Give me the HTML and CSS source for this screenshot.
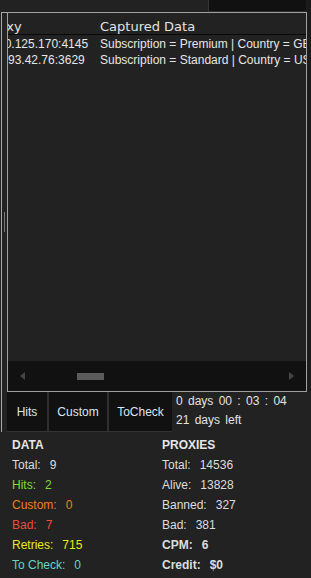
FILE: index.html
```html
<!DOCTYPE html>
<html lang="en">
<head>
  <meta charset="UTF-8">
  <meta name="viewport" content="width=device-width, initial-scale=1.0">
  <title>Checker</title>
  <link rel="stylesheet" href="styles.css">
</head>
<body>
  <div class="topbar">
    <div class="topbar-box"></div>
    <div class="topbar-side"></div>
  </div>
  <div class="main">
    <div class="rail">
      <div class="rail-grip"></div>
    </div>
    <div class="center">
      <div class="grid">
        <div class="grid-head">
          <div class="grid-row">
            <div class="cell-proxy head-proxy">Proxy</div>
            <div class="cell-data">Captured Data</div>
          </div>
        </div>
        <div class="grid-body">
          <div class="grid-row row">
            <div class="cell-proxy">60.125.170:4145</div>
            <div class="cell-data">Subscription = Premium | Country = GB</div>
          </div>
          <div class="grid-row row">
            <div class="cell-proxy">5.93.42.76:3629</div>
            <div class="cell-data">Subscription = Standard | Country = US</div>
          </div>
        </div>
        <div class="hscroll">
          <div class="arrow-left"></div>
          <div class="thumb"></div>
          <div class="arrow-right"></div>
        </div>
      </div>
      <div class="bottom">
        <div class="tabs">
          <div class="tab tab-hits">Hits</div>
          <div class="tab tab-custom">Custom</div>
          <div class="tab tab-check">ToCheck</div>
        </div>
        <div class="timer">
          <div>0 days 00 : 03 : 04</div>
          <div>21 days left</div>
        </div>
      </div>
    </div>
    <div class="vstrip"></div>
  </div>
  <div class="stats">
    <div class="stat-col data-col">
      <div class="stat-title">DATA</div>
      <div class="stat">Total:<span class="val">9</span></div>
      <div class="stat hits">Hits:<span class="val">2</span></div>
      <div class="stat custom">Custom:<span class="val">0</span></div>
      <div class="stat bad">Bad:<span class="val">7</span></div>
      <div class="stat retries">Retries:<span class="val">715</span></div>
      <div class="stat tocheck">To Check:<span class="val">0</span></div>
    </div>
    <div class="stat-col">
      <div class="stat-title">PROXIES</div>
      <div class="stat">Total:<span class="val">14536</span></div>
      <div class="stat">Alive:<span class="val">13828</span></div>
      <div class="stat">Banned:<span class="val">327</span></div>
      <div class="stat">Bad:<span class="val">381</span></div>
      <div class="stat strong">CPM:<span class="val">6</span></div>
      <div class="stat strong">Credit:<span class="val">$0</span></div>
    </div>
  </div>
</body>
</html>
```
FILE: styles.css
```css
body {
  margin: 0;
  width: 311px;
  height: 578px;
  overflow: hidden;
  background: #222;
  color: #ddd;
  font-family: "Liberation Sans", Arial, sans-serif;
  font-size: 12px;
}
.topbar {
  height: 12px;
  display: flex;
  justify-content: flex-end;
}
.topbar-box {
  width: 98px;
  background: #111;
  border-left: 1px solid #353535;
  border-bottom: 1px solid #2a2a2a;
  box-sizing: border-box;
}
.topbar-side {
  width: 5px;
  background: #1b1b1b;
}
.main {
  display: flex;
  height: 420px;
}
.rail {
  width: 6px;
  margin-left: 1px;
  border-left: 1px solid #a9a9a9;
  border-top: 1px solid #a9a9a9;
  box-sizing: border-box;
  display: flex;
  flex-direction: column;
}
.rail-grip {
  width: 1px;
  height: 20px;
  margin: 199px 0 0 2px;
  background: #7a7a7a;
}
.center {
  width: 300px;
  display: flex;
  flex-direction: column;
}
.grid {
  height: 380px;
  border: 1px solid #a0a0a0;
  box-sizing: border-box;
  display: flex;
  flex-direction: column;
  overflow: hidden;
}
.grid-row {
  display: grid;
  grid-template-columns: 120px auto;
  margin-left: -28px;
  white-space: nowrap;
}
.grid-head {
  height: 22px;
  padding-top: 6px;
  box-sizing: border-box;
  border-bottom: 1px solid #090909;
  font-family: "DejaVu Sans", sans-serif;
  font-size: 13px;
  line-height: 16px;
  color: #e2e2e2;
  flex-shrink: 0;
}
.cell-proxy {
  padding-left: 18px;
}
.head-proxy {
  padding-left: 6px;
}
.grid-body {
  flex: 1;
  padding-top: 1px;
  color: #e6e6e6;
}
.row {
  line-height: 16px;
}
.hscroll {
  height: 30px;
  flex-shrink: 0;
  background: #111;
  display: flex;
  align-items: center;
}
.arrow-left {
  margin-left: 12px;
  border-right: 5px solid #454545;
  border-top: 4px solid transparent;
  border-bottom: 4px solid transparent;
}
.thumb {
  width: 27px;
  height: 7px;
  margin-left: 52px;
  background: #5b5b5b;
}
.arrow-right {
  margin: 0 12px 0 auto;
  border-left: 5px solid #454545;
  border-top: 4px solid transparent;
  border-bottom: 4px solid transparent;
}
.bottom {
  display: flex;
  height: 40px;
}
.tabs {
  display: flex;
  gap: 2px;
  background: #2f2f2f;
  border-bottom: 1px solid #333;
}
.tab {
  background: #111;
  color: #dde6ee;
  display: flex;
  align-items: center;
  justify-content: center;
}
.tab-hits { width: 40px; }
.tab-custom { width: 58px; }
.tab-check { width: 63px; }
.timer {
  margin-left: 4px;
  line-height: 19px;
  word-spacing: 2px;
  color: #e4e4e4;
}
.vstrip {
  width: 4px;
  height: 380px;
  background: #1c1c1c;
}
.stats {
  display: flex;
  padding: 3px 0 0 12px;
  line-height: 20px;
}
.data-col {
  width: 150px;
}
.stat-title {
  font-weight: bold;
  color: #e6e6e6;
}
.val {
  margin-left: 9px;
}
.strong {
  font-weight: bold;
}
.hits { color: #84dc30; }
.custom { color: #ef7d18; }
.bad { color: #ec4a3a; }
.retries { color: #e4ec16; }
.tocheck { color: #62d6c6; }
```
